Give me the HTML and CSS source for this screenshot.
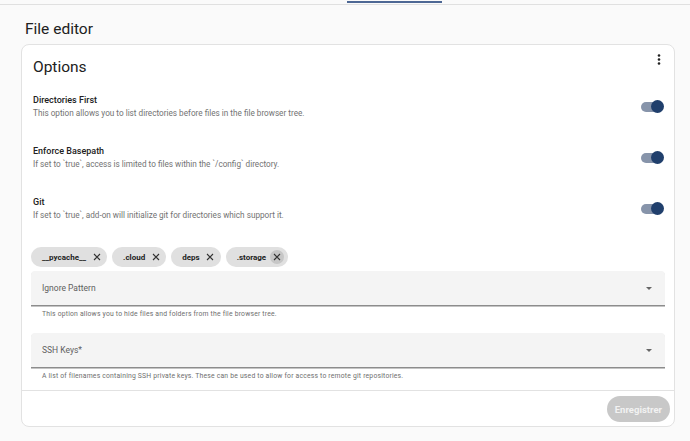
FILE: index.html
```html
<!DOCTYPE html>
<html lang="fr">
<head>
  <meta charset="UTF-8" />
  <meta name="viewport" content="width=device-width, initial-scale=1.0" />
  <title>File editor</title>
  <link rel="stylesheet" href="styles.css">
</head>
<body>
  <div class="topbar">
    <div class="tab-indicator"></div>
  </div>

  <h1 class="page-title">File editor</h1>

  <div class="card">
    <div class="card-header">
      <h2>Options</h2>
      <svg class="kebab" width="4" height="11" viewBox="0 0 4 11">
        <circle cx="2" cy="1.5" r="1.3" />
        <circle cx="2" cy="5.5" r="1.3" />
        <circle cx="2" cy="9.5" r="1.3" />
      </svg>
    </div>

    <!-- Interrupteurs -->
    <div class="option">
      <div class="option-text">
        <div class="option-title">Directories First</div>
        <div class="option-desc">This option allows you to list directories before files in the file browser tree.</div>
      </div>
      <div class="switch"><span class="track"></span><span class="knob"></span></div>
    </div>
    <div class="option">
      <div class="option-text">
        <div class="option-title">Enforce Basepath</div>
        <div class="option-desc">If set to `true`, access is limited to files within the `/config` directory.</div>
      </div>
      <div class="switch"><span class="track"></span><span class="knob"></span></div>
    </div>
    <div class="option">
      <div class="option-text">
        <div class="option-title">Git</div>
        <div class="option-desc">If set to `true`, add-on will initialize git for directories which support it.</div>
      </div>
      <div class="switch"><span class="track"></span><span class="knob"></span></div>
    </div>

    <div class="card-body">
      <div class="chips">
        <span class="chip">__pycache__
          <span class="chip-x"><svg width="8" height="8" viewBox="0 0 8 8"><path d="M1 1L7 7M7 1L1 7" /></svg></span>
        </span>
        <span class="chip">.cloud
          <span class="chip-x"><svg width="8" height="8" viewBox="0 0 8 8"><path d="M1 1L7 7M7 1L1 7" /></svg></span>
        </span>
        <span class="chip">deps
          <span class="chip-x"><svg width="8" height="8" viewBox="0 0 8 8"><path d="M1 1L7 7M7 1L1 7" /></svg></span>
        </span>
        <span class="chip">.storage
          <span class="chip-x hover"><svg width="8" height="8" viewBox="0 0 8 8"><path d="M1 1L7 7M7 1L1 7" /></svg></span>
        </span>
      </div>

      <div class="field">
        <span class="field-label">Ignore Pattern</span>
        <span class="arrow"></span>
      </div>
      <div class="helper">This option allows you to hide files and folders from the file browser tree.</div>

      <div class="field second">
        <span class="field-label">SSH Keys*</span>
        <span class="arrow"></span>
      </div>
      <div class="helper">A list of filenames containing SSH private keys. These can be used to allow for access to remote git repositories.</div>
    </div>

    <div class="card-actions">
      <button disabled>Enregistrer</button>
    </div>
  </div>
</body>
</html>
```

FILE: styles.css
```css
* {
  margin: 0;
  padding: 0;
  box-sizing: border-box;
}
body {
  font-family: Roboto, 'Liberation Sans', sans-serif;
  background: #fafafa;
  color: #212121;
  height: 441px;
  overflow: hidden;
}
/* Barre d'onglets en haut */
.topbar {
  height: 4px;
  border-bottom: 1px solid #e0e0e0;
}
.tab-indicator {
  margin: 1px 0 0 347px;
  width: 95px;
  height: 2px;
  background: #4d6794;
}
.page-title {
  padding: 14px 25px 0;
  height: 39px;
  line-height: 20px;
  font-size: 15.5px;
  font-weight: 400;
}
.card {
  margin: 0 15px 0 21px;
  background: #fff;
  border: 1px solid #e2e2e2;
  border-radius: 8px;
}
.card-header {
  display: flex;
  justify-content: space-between;
  align-items: flex-start;
  padding: 9px 13px 4px 11px;
}
.card-header h2 {
  margin-top: 3px;
  line-height: 20px;
  font-size: 15.5px;
  font-weight: 400;
}
.kebab {
  fill: #212121;
}
.option {
  display: flex;
  align-items: center;
  justify-content: space-between;
  height: 51px;
  padding: 0 10px 0 11px;
}
.option-title {
  font-size: 9px;
  font-weight: 500;
  line-height: 13px;
}
.option-desc {
  font-size: 8.2px;
  line-height: 13px;
  color: #727272;
}
.switch {
  display: flex;
  align-items: center;
}
.track {
  width: 18px;
  height: 10px;
  border-radius: 5px;
  background: #8794aa;
}
.knob {
  width: 13px;
  height: 13px;
  margin-left: -8px;
  border-radius: 50%;
  background: #203f6c;
}
.card-body {
  padding: 13px 9px 0;
}
.chips {
  display: flex;
  gap: 5px;
  margin-bottom: 4px;
}
.chip {
  display: flex;
  align-items: center;
  gap: 4px;
  height: 20px;
  padding: 0 4px 0 11px;
  border-radius: 10px;
  background: #e0e0e0;
  font-size: 8px;
  font-weight: 700;
  color: #222;
}
.chip-x {
  display: flex;
  align-items: center;
  justify-content: center;
  width: 13px;
  height: 13px;
  border-radius: 50%;
}
.chip-x svg {
  stroke: #333;
  stroke-width: 1.1;
  fill: none;
}
.chip-x.hover {
  width: 14px;
  height: 14px;
  background: #c6c6c6;
}
.field {
  display: flex;
  align-items: center;
  justify-content: space-between;
  height: 35px;
  padding: 0 13px 0 11px;
  background: #f4f4f4;
  border-radius: 4px 4px 0 0;
  border-bottom: 1px solid #8c8c8c;
  box-shadow: 0 1px 0 #c4c4c4;
}
.field.second {
  margin-top: 14px;
}
.field-label {
  font-size: 8.5px;
  color: #5f5f5f;
}
.arrow {
  width: 0;
  height: 0;
  border-left: 3px solid transparent;
  border-right: 3px solid transparent;
  border-top: 3px solid #666;
}
.helper {
  margin-top: 3px;
  padding-left: 11px;
  font-size: 6.8px;
  line-height: 10px;
  letter-spacing: 0.2px;
  color: #6e6e6e;
}
.card-actions {
  display: flex;
  justify-content: flex-end;
  margin-top: 9px;
  padding: 5px 4px 4px;
  border-top: 1px solid #e2e2e2;
}
button {
  height: 26px;
  padding: 0 8px;
  border: none;
  border-radius: 13px;
  background: #c8c8c8;
  color: #f2f2f2;
  font-family: inherit;
  font-size: 9.5px;
  font-weight: 700;
}
```
